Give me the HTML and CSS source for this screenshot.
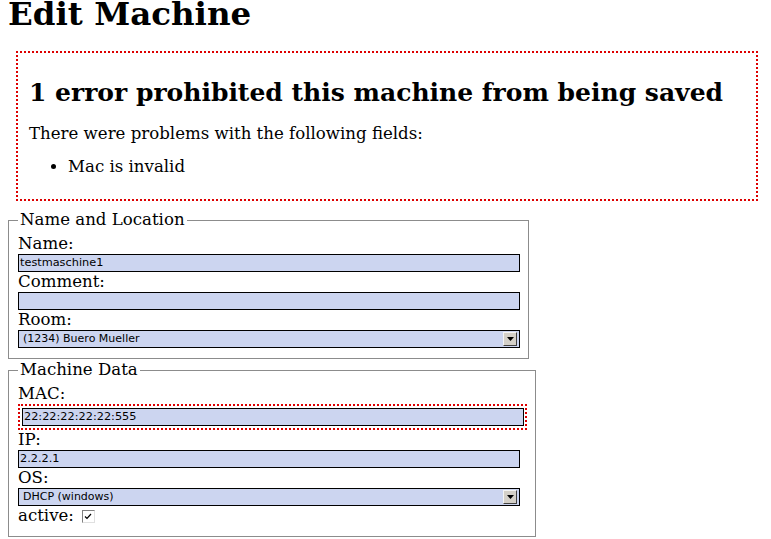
FILE: index.html
```html
<!DOCTYPE html>
<html>
<head>
<meta charset="utf-8">
<title>Edit Machine</title>
<link rel="stylesheet" href="styles.css">
</head>
<body>
<h1 class="title">Edit Machine</h1>
<div class="error-box">
  <h2 class="error-title">1 error prohibited this machine from being saved</h2>
  <p class="error-intro">There were problems with the following fields:</p>
  <ul class="error-list">
    <li>Mac is invalid</li>
  </ul>
</div>
<form class="machine-form">
  <fieldset class="group">
    <legend class="group-legend">Name and Location</legend>
    <label class="field-label">Name:</label>
    <div class="text-input">testmaschine1</div>
    <label class="field-label">Comment:</label>
    <div class="text-input"></div>
    <label class="field-label">Room:</label>
    <div class="select-input"><span class="select-text">(1234) Buero Mueller</span><span class="select-btn"><svg width="7" height="4" viewBox="0 0 7 4"><path d="M0 0H7L3.5 4Z" fill="#000"/></svg></span></div>
  </fieldset>
  <fieldset class="group second">
    <legend class="group-legend">Machine Data</legend>
    <label class="field-label">MAC:</label>
    <div class="field-error"><div class="text-input">22:22:22:22:22:555</div></div>
    <label class="field-label">IP:</label>
    <div class="text-input">2.2.2.1</div>
    <label class="field-label">OS:</label>
    <div class="select-input"><span class="select-text">DHCP (windows)</span><span class="select-btn"><svg width="7" height="4" viewBox="0 0 7 4"><path d="M0 0H7L3.5 4Z" fill="#000"/></svg></span></div>
    <div class="check-row"><span class="field-label inline">active:</span><span class="checkbox"><svg width="8" height="7" viewBox="0 0 8 7"><path d="M1 3.5L3 5.5L7 1" fill="none" stroke="#000" stroke-width="1.2"/></svg></span></div>
  </fieldset>
</form>
</body>
</html>
```
FILE: styles.css
```css
html, body {
  background: #fff;
}
body {
  margin: 0 8px;
  font-family: "DejaVu Serif", serif;
  font-size: 16.6px;
  color: #000;
}
.title {
  margin: 3px 0 0;
  font-size: 32.5px;
  line-height: 22px;
  font-weight: bold;
}
.error-box {
  margin: 26px 5px 0 8px;
  border: 2px dotted #dd0000;
  padding: 0 11px;
}
.error-title {
  margin: 25px 0 0;
  font-size: 25px;
  font-weight: bold;
}
.error-intro {
  margin: 17px 0 0;
  line-height: 19px;
}
.error-list {
  margin: 14px 0 23px;
  padding-left: 39px;
  line-height: 19px;
}
.machine-form {
  margin-top: 9px;
}
.group {
  width: fit-content;
  margin: 0;
  padding: 4px 8px 10px 9px;
  border: 1px solid #8c8c8c;
}
.group.second {
  margin-top: 1px;
  padding-bottom: 10px;
}
.group-legend {
  padding: 0 2px;
  margin-left: 0;
  line-height: 20px;
}
.field-label {
  display: block;
  line-height: 20px;
}
.field-label.inline {
  display: inline;
}
.text-input {
  box-sizing: border-box;
  width: 502px;
  height: 18px;
  border: 1px solid #000;
  background: #ccd5f0;
  font-family: "DejaVu Sans", sans-serif;
  font-size: 11.3px;
  line-height: 16px;
  padding: 0 1px;
}
.field-error {
  border: 2px dotted #dd0000;
  padding: 2px 1px 2px 2px;
  width: fit-content;
}
.select-input {
  box-sizing: border-box;
  width: 502px;
  height: 18px;
  border: 1px solid #000;
  background: #ccd5f0;
  display: flex;
  align-items: stretch;
  font-family: "DejaVu Sans", sans-serif;
  font-size: 11px;
  line-height: 16px;
}
.select-text {
  flex: 1;
  padding-left: 4px;
}
.select-btn {
  width: 14px;
  margin: 1px 2px 1px 1px;
  background: #d4d0c8;
  border-top: 1px solid #f4f4f4;
  border-left: 1px solid #f4f4f4;
  border-right: 1px solid #404040;
  border-bottom: 1px solid #404040;
  box-sizing: border-box;
  display: flex;
  align-items: center;
  justify-content: center;
}
.check-row {
  display: flex;
  align-items: center;
  gap: 8px;
  line-height: 20px;
}
.checkbox {
  box-sizing: border-box;
  width: 13px;
  height: 13px;
  border-top: 1px solid #808080;
  border-left: 1px solid #808080;
  border-right: 1px solid #e0e0e0;
  border-bottom: 1px solid #e0e0e0;
  background: #fff;
  display: flex;
  align-items: center;
  justify-content: center;
}
```
